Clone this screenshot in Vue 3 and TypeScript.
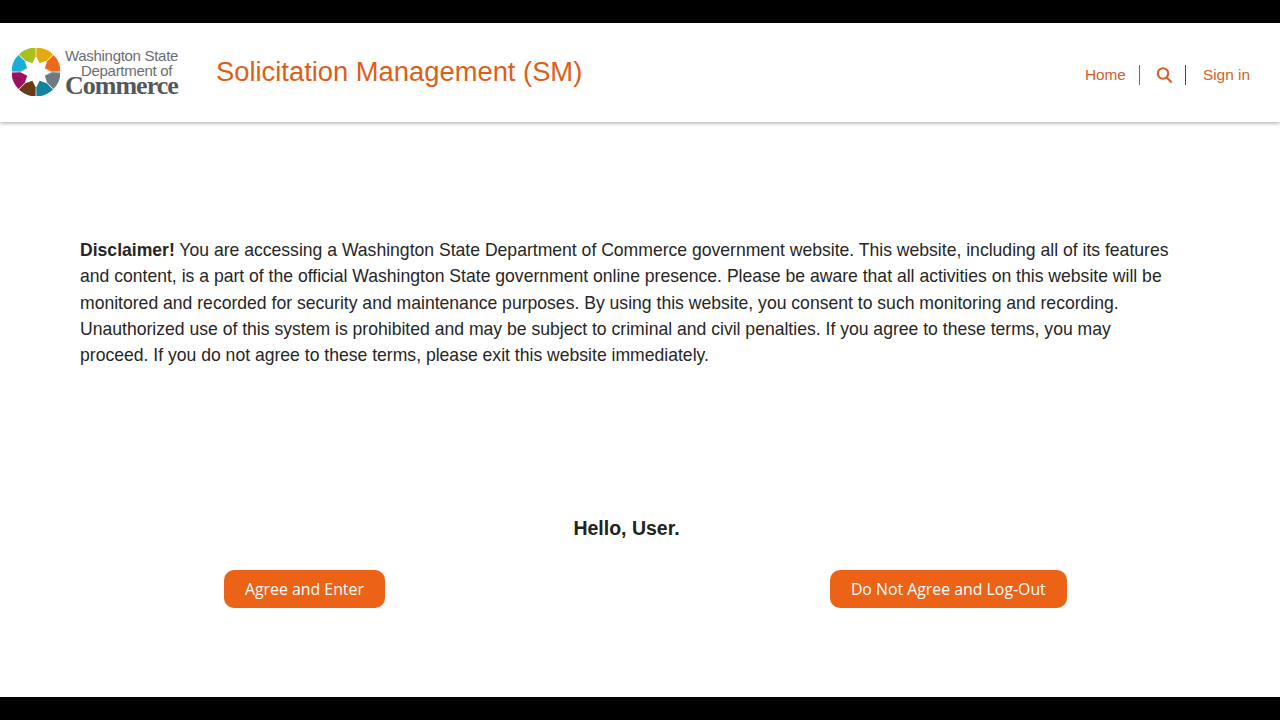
<script setup lang="ts">
const cx = 24, cy = 24
const colors = ['#e3aa12', '#ec6a1e', '#6f7a82', '#13829f', '#6a3a16', '#99115f', '#1baedb', '#a9c11c']
const pt = (r: number, deg: number) => {
  const a = (deg - 90) * Math.PI / 180
  return `${(cx + r * Math.cos(a)).toFixed(2)} ${(cy + r * Math.sin(a)).toFixed(2)}`
}
const petals = colors.map((fill, i) => {
  const s = i * 45 + 1, e = (i + 1) * 45 - 1, m = i * 45 + 22.5
  return { fill, d: `M${pt(24.5, s)} A24.5 24.5 0 0 1 ${pt(24.5, e)} L${pt(15.5, e)} L${pt(9.5, m)} L${pt(15.5, s)} Z` }
})
const disclaimer = ' You are accessing a Washington State Department of Commerce government website. This website, including all of its features and content, is a part of the official Washington State government online presence. Please be aware that all activities on this website will be monitored and recorded for security and maintenance purposes. By using this website, you consent to such monitoring and recording. Unauthorized use of this system is prohibited and may be subject to criminal and civil penalties. If you agree to these terms, you may proceed. If you do not agree to these terms, please exit this website immediately.'
</script>

<template>
  <div class="page">
    <div class="bar top"></div>
    <header class="header">
      <div class="logo">
        <svg class="mark" width="48" height="48" viewBox="0 0 48 48" aria-hidden="true">
          <path v-for="p in petals" :key="p.fill" :d="p.d" :fill="p.fill" />
        </svg>
        <div class="wordmark">
          <span class="w1">Washington State</span>
          <span class="w2">Department of</span>
          <span class="w3">Commerce</span>
        </div>
      </div>
      <h1 class="title">Solicitation Management (SM)</h1>
      <nav class="nav">
        <a class="link home">Home</a>
        <span class="search">
          <svg width="16" height="16" viewBox="0 0 16 16" fill="none" stroke="#d2612a" stroke-width="2.1" aria-hidden="true">
            <circle cx="7" cy="6.5" r="5.2" />
            <path d="M10.8 10.4 15 14.8" stroke-linecap="round" />
          </svg>
        </span>
        <a class="link signin">Sign in</a>
      </nav>
    </header>
    <main class="main">
      <p class="disclaimer"><strong>Disclaimer!</strong>{{ disclaimer }}</p>
      <div class="hello">Hello, User.</div>
      <div class="actions">
        <button class="btn agree" type="button">Agree and Enter</button>
        <button class="btn" type="button">Do Not Agree and Log-Out</button>
      </div>
    </main>
    <div class="bar bottom"></div>
  </div>
</template>

<style>
html, body { margin: 0; background: #fff; }
</style>

<style scoped>
.page {
  width: 1280px;
  height: 720px;
  display: flex;
  flex-direction: column;
  overflow: hidden;
  font-family: "Liberation Sans", Arial, sans-serif;
  background: #fff;
}
.bar { background: #000; flex: none; }
.top { height: 23px; }
.bottom { height: 23px; }
.header {
  flex: none;
  height: 99px;
  display: flex;
  align-items: center;
  box-shadow: 0 1px 4px rgba(0, 0, 0, 0.35);
  padding: 0 30px 0 12px;
  position: relative;
  box-sizing: border-box;
}
.logo { display: flex; align-items: center; width: 204px; flex: none; margin-bottom: 2px; }
.mark { flex: none; }
.wordmark {
  margin: 0 0 2px 5px;
  width: 114px;
  display: flex;
  flex-direction: column;
  align-items: flex-start;
  color: #6a6d70;
}
.w1 { font-size: 15px; line-height: 15px; letter-spacing: -0.3px; white-space: nowrap; }
.w2 { font-size: 15px; line-height: 15px; letter-spacing: -0.3px; margin-left: 16px; white-space: nowrap; }
.w3 {
  font-family: "Liberation Serif", serif;
  font-weight: 700;
  font-size: 26px;
  line-height: 15px;
  letter-spacing: -1px;
  color: #55585b;
  white-space: nowrap;
}
.title {
  margin: 0 0 2px;
  font-size: 27.35px;
  font-weight: 400;
  color: #dd5f17;
  white-space: nowrap;
}
.nav {
  margin-left: auto;
  display: flex;
  align-items: center;
  margin-top: 5px;
  color: #d2612a;
  font-size: 15.4px;
}
.link { line-height: 20px; white-space: nowrap; }
.home { padding-right: 13px; }
.search {
  height: 20px;
  display: flex;
  align-items: center;
  padding: 0 13px 0 16px;
  border-left: 1px solid #666;
  border-right: 1px solid #444;
}
.signin { padding-left: 17px; }
.main { flex: 1; display: flex; flex-direction: column; min-height: 0; }
.disclaimer {
  margin: 115px 0 0;
  padding: 0 107px 0 80px;
  font-size: 17.58px;
  line-height: 26.35px;
  color: #262626;
}
.disclaimer strong { font-weight: 700; }
.hello {
  margin-top: 147px;
  padding-right: 27px;
  text-align: center;
  font-size: 19.5px;
  line-height: 24px;
  font-weight: 700;
  color: #222;
}
.actions {
  margin-top: 30px;
  padding-left: 224px;
  display: flex;
  gap: 445px;
}
.btn {
  height: 38px;
  padding: 0 21px;
  border: none;
  border-radius: 10px;
  background: #ec6217;
  color: #fff;
  font-family: "Open Sans", sans-serif;
  font-size: 15.85px;
  font-weight: 500;
  white-space: nowrap;
}
</style>
